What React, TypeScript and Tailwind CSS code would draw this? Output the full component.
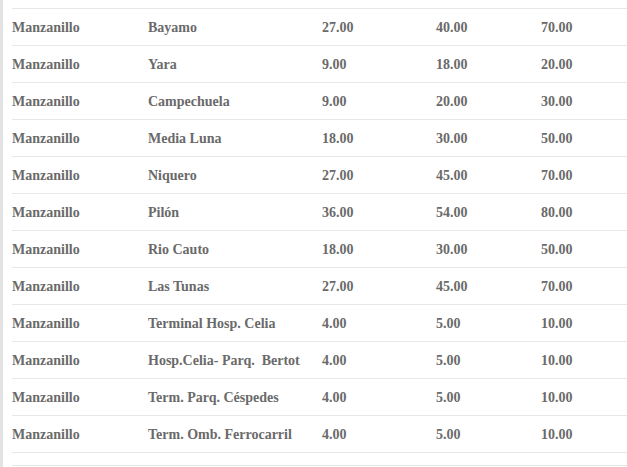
const rows = [
  ['Bayamo', '27.00', '40.00', '70.00'],
  ['Yara', '9.00', '18.00', '20.00'],
  ['Campechuela', '9.00', '20.00', '30.00'],
  ['Media Luna', '18.00', '30.00', '50.00'],
  ['Niquero', '27.00', '45.00', '70.00'],
  ['Pilón', '36.00', '54.00', '80.00'],
  ['Rio Cauto', '18.00', '30.00', '50.00'],
  ['Las Tunas', '27.00', '45.00', '70.00'],
  ['Terminal Hosp. Celia', '4.00', '5.00', '10.00'],
  ['Hosp.Celia- Parq.\u00a0 Bertot', '4.00', '5.00', '10.00'],
  ['Term. Parq. Céspedes', '4.00', '5.00', '10.00'],
  ['Term. Omb. Ferrocarril', '4.00', '5.00', '10.00'],
];

export default function App() {
  return (
    <div className="flex min-h-[467px] bg-white font-['Liberation_Serif',serif] text-[14px] font-bold text-[#6a6a6a]">
      <div className="w-[3px] shrink-0 bg-[#e2e2e2]" />
      <div className="flex-1 pl-[9px] pt-[8px]">
        <table className="w-full border-collapse">
          <tbody>
            {rows.map((r, i) => (
              <tr key={i} className="h-[37px] border-y border-[#e8e8e8]">
                <td className="w-[136px] p-0">Manzanillo</td>
                <td className="w-[174px] p-0">{r[0]}</td>
                <td className="w-[114px] p-0">{r[1]}</td>
                <td className="w-[105px] p-0">{r[2]}</td>
                <td className="p-0">{r[3]}</td>
              </tr>
            ))}
          </tbody>
        </table>
        <div className="mt-[12px] border-t border-[#e8e8e8]" />
      </div>
    </div>
  );
}
